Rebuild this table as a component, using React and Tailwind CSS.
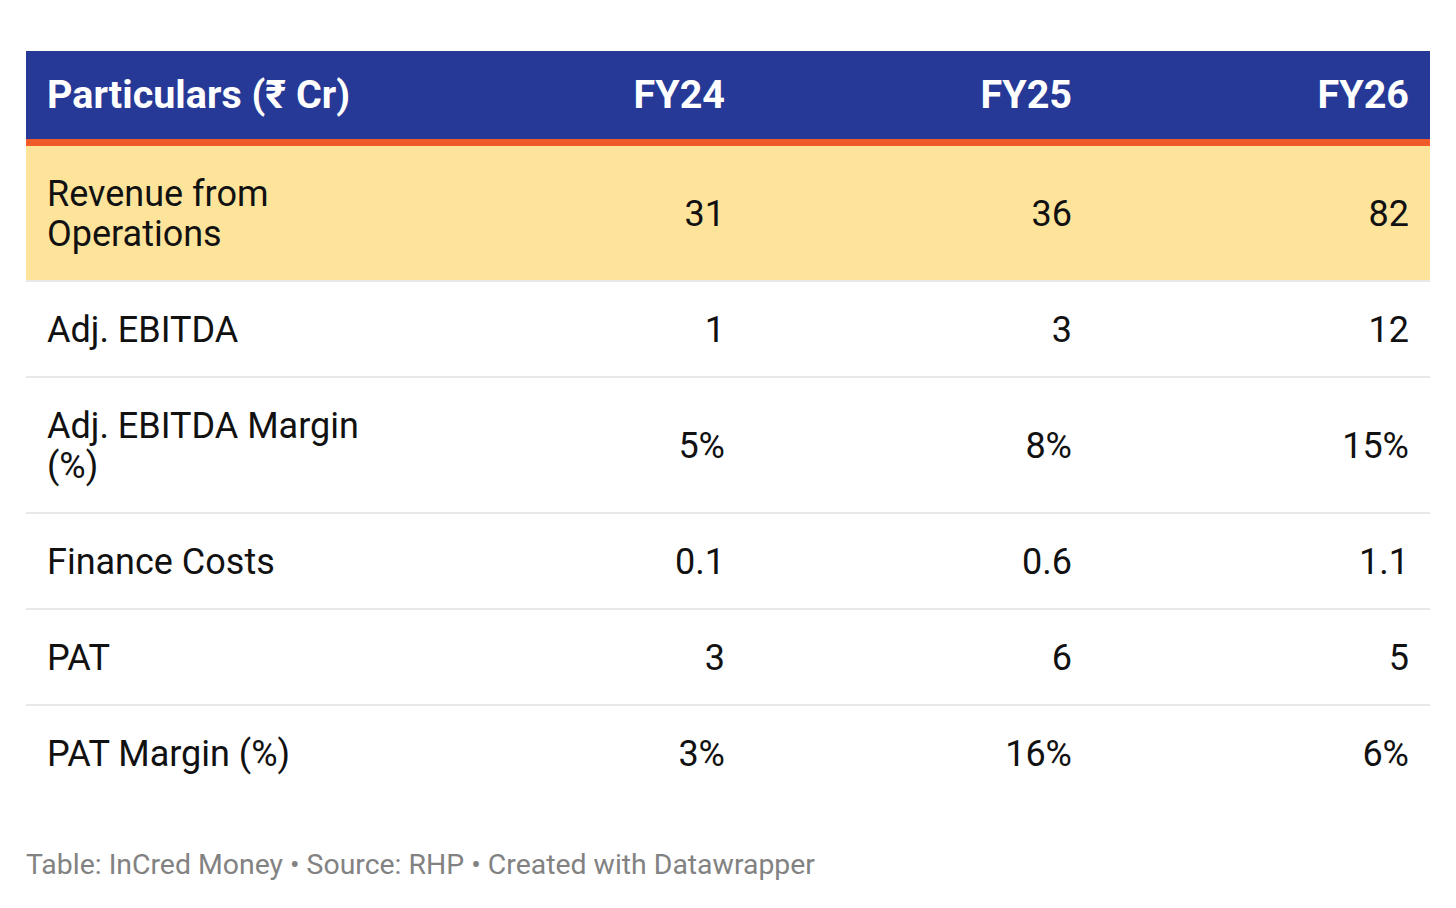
const rows = [
  { label: 'Revenue from Operations', v: ['31', '36', '82'], highlight: true },
  { label: 'Adj. EBITDA', v: ['1', '3', '12'] },
  { label: 'Adj. EBITDA Margin (%)', v: ['5%', '8%', '15%'] },
  { label: 'Finance Costs', v: ['0.1', '0.6', '1.1'] },
  { label: 'PAT', v: ['3', '6', '5'] },
  { label: 'PAT Margin (%)', v: ['3%', '16%', '6%'] },
];

const cols = 'grid grid-cols-[373px_347px_347px_337px]';

export default function App() {
  return (
    <div
      className="w-[1456px] h-[908px] bg-white pt-[51px] pl-[26px]"
      style={{ fontFamily: 'Roboto, "Noto Sans", sans-serif' }}
    >
      <div className="w-[1404px]">
        {/* header */}
        <div className={`${cols} h-[95px] bg-[#273996] border-b-[7px] border-[#f05a28] text-white font-bold text-[39.5px] leading-[40px]`}>
          <div className="px-[21px] flex items-center whitespace-nowrap">Particulars (₹ Cr)</div>
          <div className="px-[21px] flex items-center justify-end">FY24</div>
          <div className="px-[21px] flex items-center justify-end">FY25</div>
          <div className="px-[21px] flex items-center justify-end">FY26</div>
        </div>

        {rows.map((r, i) => (
          <div
            key={r.label}
            className={`${cols} text-[36px] leading-[40px] text-[#111111] ${
              r.highlight ? 'bg-[#fee49b]' : 'bg-white'
            } ${i < rows.length - 1 ? 'border-b-2 border-[#e8e8e8]' : ''}`}
          >
            <div className="px-[21px] pt-[28px] pb-[26px] flex items-center">{r.label}</div>
            {r.v.map((val, j) => (
              <div key={j} className="px-[21px] pt-[28px] pb-[26px] flex items-center justify-end">
                {val}
              </div>
            ))}
          </div>
        ))}

        <div className="mt-[50px] text-[28.4px] leading-[30px] text-[#828282]">
          Table: InCred Money • Source: RHP • Created with Datawrapper
        </div>
      </div>
    </div>
  );
}
